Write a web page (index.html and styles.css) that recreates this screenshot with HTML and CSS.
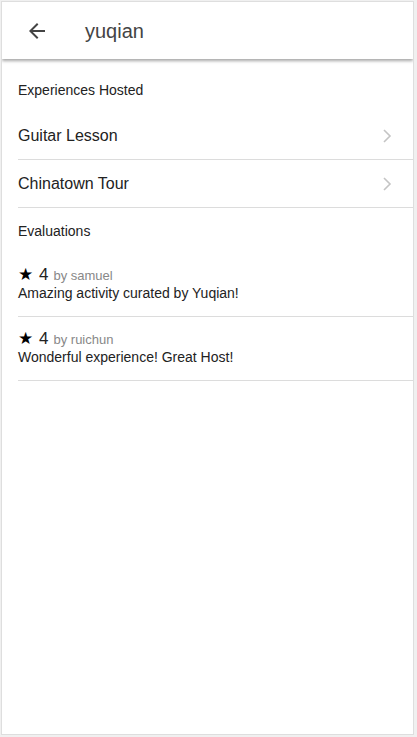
FILE: index.html
```html
<!DOCTYPE html>
<html>
<head>
<meta charset="utf-8">
<link rel="stylesheet" href="styles.css">
</head>
<body>
<div class="frame">
  <header class="topbar">
    <button class="back" aria-label="Back">
      <svg width="24" height="24" viewBox="0 0 24 24"><path d="M20 11H7.83l5.59-5.59L12 4l-8 8 8 8 1.41-1.41L7.83 13H20v-2z" fill="#444"/></svg>
    </button>
    <h1 class="title">yuqian</h1>
  </header>
  <main class="content">
    <div class="section-label">Experiences Hosted</div>
    <ul class="list">
      <li class="item"><span>Guitar Lesson</span>
        <svg class="chev" width="10" height="16" viewBox="0 0 10 16"><path d="M2 2l6 6-6 6" fill="none" stroke="#c4c4c4" stroke-width="1.6"/></svg></li>
      <li class="item"><span>Chinatown Tour</span>
        <svg class="chev" width="10" height="16" viewBox="0 0 10 16"><path d="M2 2l6 6-6 6" fill="none" stroke="#c4c4c4" stroke-width="1.6"/></svg></li>
    </ul>
    <div class="section-label eval-label">Evaluations</div>
    <ul class="evals">
      <li class="eval">
        <div class="rating"><span class="star">★</span><span class="score">4</span><span class="by">by samuel</span></div>
        <div class="comment">Amazing activity curated by Yuqian!</div>
      </li>
      <li class="eval">
        <div class="rating"><span class="star">★</span><span class="score">4</span><span class="by">by ruichun</span></div>
        <div class="comment">Wonderful experience! Great Host!</div>
      </li>
    </ul>
  </main>
</div>
</body>
</html>
```
FILE: styles.css
```css
html, body { margin: 0; padding: 0; }
body {
  background: #f0f0f0;
  font-family: "Liberation Sans", Arial, sans-serif;
  color: #222;
}
.frame {
  margin: 1px 3px 2px 1px;
  height: 732px;
  border: 1px solid #dedede;
  background: #fff;
  overflow: hidden;
}
.topbar {
  height: 57px;
  display: flex;
  align-items: center;
  background: #fff;
  box-shadow: 0 2px 3px rgba(0,0,0,0.35);
  position: relative;
}
.back {
  border: 0;
  background: none;
  padding: 0;
  margin-left: 23px;
  width: 24px;
  height: 24px;
  display: flex;
}
.title {
  margin: 2px 0 0 36px;
  font-size: 20px;
  font-weight: normal;
  color: #444;
}
.content { padding-left: 16px; }
.section-label {
  font-size: 14px;
  color: #222;
  padding-top: 23px;
  height: 53px;
  box-sizing: border-box;
}
.list, .evals { list-style: none; margin: 0; padding: 0; }
.item {
  height: 47px;
  border-bottom: 1px solid #dcdcdc;
  display: flex;
  align-items: center;
  justify-content: space-between;
  font-size: 16px;
  color: #222;
  padding-right: 21px;
}
.eval-label { padding-top: 15px; height: 45px; }
.eval {
  border-bottom: 1px solid #dcdcdc;
  padding: 11px 0 0;
  height: 64px;
  box-sizing: border-box;
}
.rating { display: flex; align-items: baseline; height: 21px; }
.star { font-size: 17px; color: #000; margin-right: 6px; }
.score { font-size: 17px; color: #222; margin-right: 5px; }
.by { font-size: 13px; color: #888; }
.comment { font-size: 14px; color: #222; }
```
